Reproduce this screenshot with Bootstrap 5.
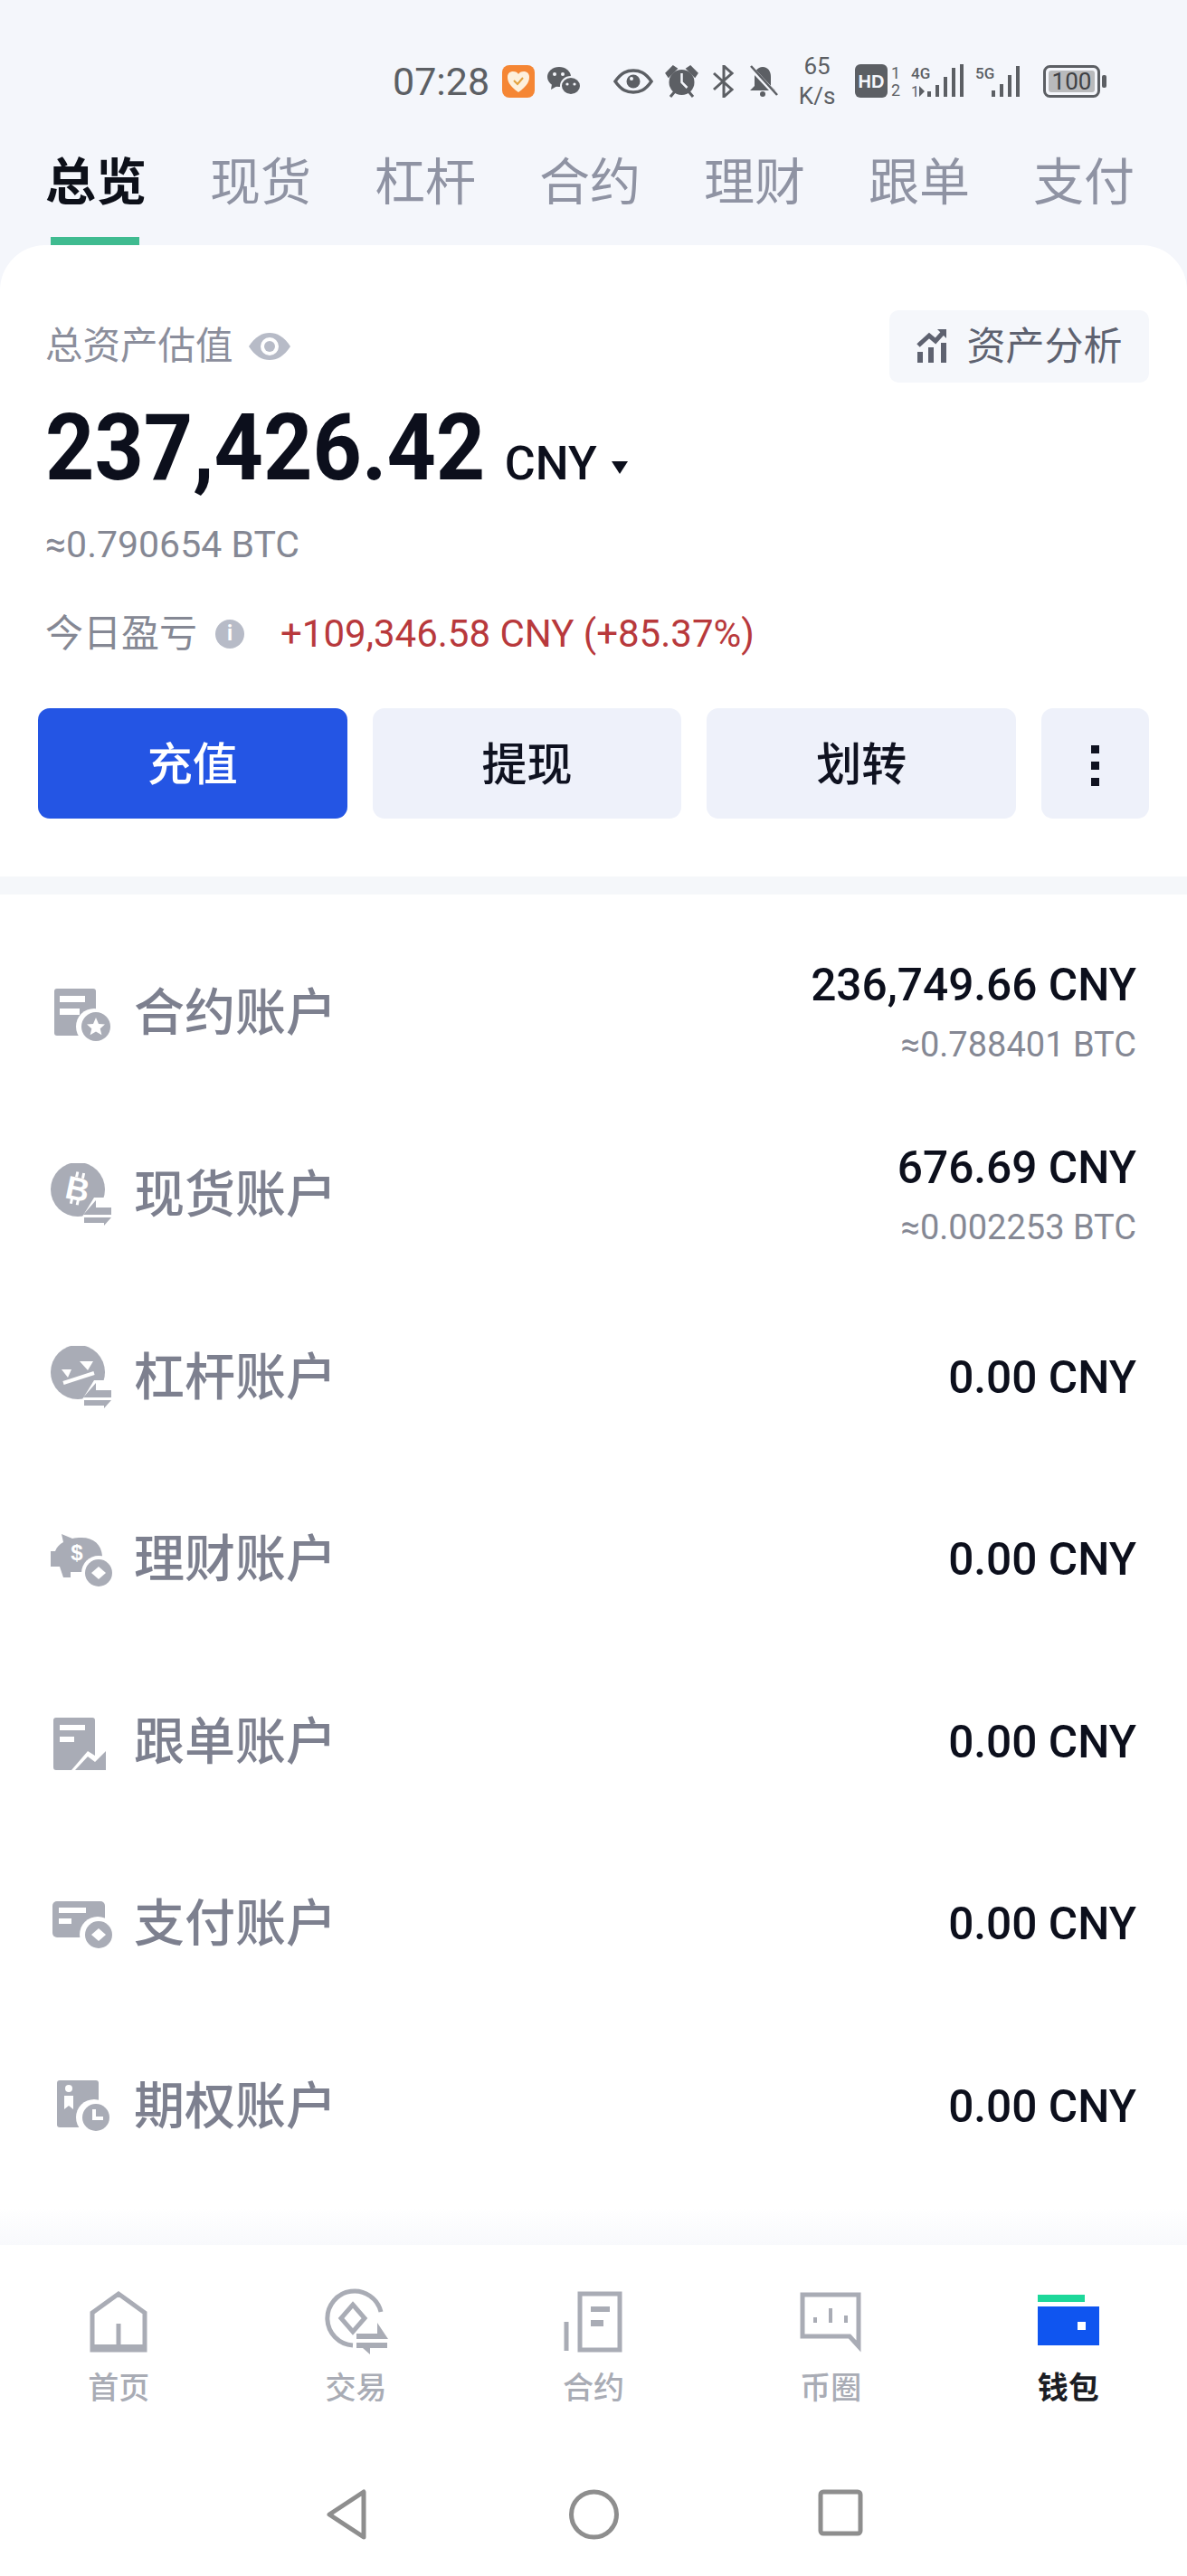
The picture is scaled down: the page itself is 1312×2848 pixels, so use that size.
<!DOCTYPE html>
<html lang="zh">
<head>
  <meta charset="UTF-8">
  <title>钱包</title>
  <link href="https://cdn.jsdelivr.net/npm/bootstrap@5.3.0/dist/css/bootstrap.min.css" rel="stylesheet">
  <style>
    body {
      background-color: #f4f6fb;
      font-family: Roboto, "Noto Sans CJK SC", sans-serif;
      width: 1312px;
      height: 2848px;
      overflow: hidden;
    }
    /* barra de estado */
    .estado {
      height: 140px;
      padding: 39px 0 0 434px;
      color: #5c5f64;
    }
    .estado svg { display: block; flex: none; }
    .hora { font-size: 43px; line-height: 52px; margin-right: 14px; white-space: nowrap; flex: none; }
    .velocidad { font-size: 26px; line-height: 33px; width: 44px; text-align: center; margin: 0 20px 0 21px; flex: none; }
    .gap-wechat { margin-left: 13px; }
    .gap-ojo { margin-left: 36px; }
    .gap-icono { margin-left: 13px; }
    .gap-bateria { margin-left: 16px; }
    /* pestañas */
    .pestanas { height: 131px; padding-left: 50px; gap: 70px; }
    .pestana { width: 112px; font-size: 56px; line-height: 60px; padding-top: 32px; color: #8f93a3; white-space: nowrap; }
    .pestana-activa { color: #0d1019; font-weight: 700; }
    .subrayado { display: block; width: 98px; height: 9px; margin: 30px auto 0 6px; background: #3fbb90; }
    /* tarjeta principal */
    .tarjeta-total {
      height: 698px;
      background: #fff;
      border-radius: 50px 50px 0 0;
      padding: 72px 42px 0 50px;
    }
    .total-label { font-size: 41.500px; line-height: 80px; color: #8b8e9c; }
    .total-ojo { margin-left: 16px; }
    .btn-analisis {
      width: 287px; height: 80px; background: #f5f7fb; border-radius: 10px;
      font-size: 43px; color: #5e6270; border: 0; padding: 0;
    }
    .analisis-icono { margin-right: 22px; }
    .monto { color: #0c0f1c; margin-top: 17px; height: 110px; }
    .monto-num {
      font-size: 102px; font-weight: 700; line-height: 110px;
      display: inline-block; transform: scaleX(.93); transform-origin: left; margin-right: -36px;
    }
    .monto-cny { font-size: 52px; font-weight: 500; margin-left: 21px; }
    .monto-flecha { width: 0; height: 0; border-left: 9px solid transparent; border-right: 9px solid transparent; border-top: 14px solid #0c0f1c; margin: 0 0 26px 16px; align-self: flex-end; }
    .btc-total { font-size: 41px; line-height: 50px; color: #858894; margin-top: 27px; }
    .hoy { font-size: 42px; line-height: 50px; color: #858894; margin-top: 49px; }
    .hoy-valor { color: #b8393c; margin-left: 40px; }
    .info-redonda {
      width: 32px; height: 32px; border-radius: 50%; background: #b7bbc7; color: #fff;
      font-size: 23px; font-weight: 700; line-height: 32px; text-align: center; margin-left: 20px;
    }
    .acciones { margin: 57px 0 0 -8px; gap: 28px; }
    .btn-accion {
      width: 342px; height: 122px; border: 0; border-radius: 13px; padding: 4px 0 0;
      font-size: 50px; font-weight: 500; background: #eef1fa; color: #0f1220;
    }
    .btn-azul { background: #2455e4; color: #fff; }
    .btn-azul:hover { background: #2455e4; color: #fff; }
    .btn-mas { width: 119px; }
    .puntos i { display: block; width: 9px; height: 9px; background: #0f1220; margin: 9px 0; }
    .separador { height: 20px; background: #f5f7fa; }
    /* cuentas */
    .cuentas { padding: 30px 0 0; height: 1493px; background: #fff; }
    .cuenta { height: 201.500px; padding: 0 56px 0 54px; }
    .cuenta-icono { width: 74px; height: 70px; margin-right: 20px; flex: none; }
    .cuenta-nombre { font-size: 56px; font-weight: 500; color: #7d808f; }
    .cuenta-valor { font-size: 49.600px; line-height: 60px; font-weight: 500; color: #0c0f1c; text-align: right; }
    .cuenta-btc { font-size: 38px; line-height: 50px; color: #858894; text-align: right; margin-top: 11px; }
    .sombra-nav { height: 40px; margin-top: -40px; background: linear-gradient(#fff, #f8f9fc); position: relative; }
    /* navegación inferior */
    .nav-inferior { height: 366px; background: #fff; }
    .nav-item-inf { width: 262.400px; height: 186px; padding-top: 51px; text-align: center; font-size: 34px; font-weight: 500; color: #a9acb5; line-height: 40px; }
    .nav-item-inf svg { display: block; margin: 0 auto 19px; overflow: visible; }
    .nav-item-activo { color: #1b1d24; font-weight: 700; }
    .sistema { height: 180px; padding: 84px 0 0 360px; }
    .sistema svg { display: block; flex: none; }
    .sis-circulo { margin-left: 223px; }
    .sis-cuadro { margin-left: 220px; }
  </style>
</head>
<body>

  <!-- barra de estado -->
  <div class="estado d-flex align-items-center">
    <div class="hora">07:28</div>
    <svg width="36" height="36" viewBox="0 0 36 36"><rect width="36" height="36" rx="8" fill="#f58634"/><path d="M18 30C8 23 6 18 6 13c0-4 3-6 6-6 3 0 5 1 6 3 1-2 3-3 6-3 3 0 6 2 6 6 0 5-2 10-12 17z" fill="#fdf0dc"/><path d="M13 17l4 4 6-7" fill="none" stroke="#e2a13c" stroke-width="2"/></svg>
    <svg class="gap-wechat" width="38" height="34" viewBox="0 0 38 34"><ellipse cx="14" cy="12" rx="13" ry="11" fill="#5c5f64"/><path d="M6 20l-1 6 7-4z" fill="#5c5f64"/><ellipse cx="27" cy="22" rx="11" ry="10" fill="#5c5f64" stroke="#f4f6fb" stroke-width="2"/><circle cx="9" cy="9" r="2" fill="#f4f6fb"/><circle cx="18" cy="9" r="2" fill="#f4f6fb"/><circle cx="23" cy="20" r="1.600" fill="#f4f6fb"/><circle cx="31" cy="20" r="1.600" fill="#f4f6fb"/></svg>
    <svg class="gap-ojo" width="44" height="28" viewBox="0 0 44 28"><path d="M2 14C9 4 15 2 22 2s13 2 20 12c-7 10-13 12-20 12S9 24 2 14z" fill="none" stroke="#5c5f64" stroke-width="3.500"/><circle cx="22" cy="14" r="7.500" fill="#5c5f64"/><circle cx="20" cy="11" r="2" fill="#f4f6fb"/></svg>
    <svg class="gap-icono" width="37" height="36" viewBox="0 0 37 36"><circle cx="18.500" cy="19" r="14" fill="#5c5f64"/><path d="M2 9l7-7 3 2-8 8zM35 9l-7-7-3 2 8 8zM6 35l5-6M31 35l-5-6" stroke="#5c5f64" stroke-width="3" fill="#5c5f64"/><path d="M18.500 9v10l6 6" stroke="#f4f6fb" stroke-width="2.500" fill="none"/></svg>
    <svg class="gap-icono" width="29" height="36" viewBox="0 0 29 36"><path d="M4 9l20 18-9 8V1l9 8L4 27" fill="none" stroke="#5c5f64" stroke-width="3"/></svg>
    <svg class="gap-icono" width="33" height="36" viewBox="0 0 33 36"><path d="M16 2c-6 0-9 5-9 11v10l-5 5h28l-5-5V13c0-6-3-11-9-11z" fill="#5c5f64"/><circle cx="16" cy="32" r="3" fill="#5c5f64"/><path d="M2 2l30 32" stroke="#f4f6fb" stroke-width="5"/><path d="M3 1l29 32" stroke="#5c5f64" stroke-width="2.500"/></svg>
    <div class="velocidad">65<br>K/s</div>
    <svg width="192" height="44" viewBox="0 -3 192 44">
      <rect width="36" height="37" rx="6" fill="#5c5f64"/>
      <text x="18" y="26" text-anchor="middle" font-family="Liberation Sans" font-weight="700" font-size="20" fill="#f4f6fb">HD</text>
      <text x="45" y="16" text-anchor="middle" font-family="Roboto" font-size="18" fill="#5c5f64">1</text>
      <text x="45" y="35" text-anchor="middle" font-family="Roboto" font-size="18" fill="#5c5f64">2</text>
      <text x="62" y="16" font-family="Roboto" font-weight="500" font-size="17" fill="#5c5f64">4G</text>
      <text x="62" y="36" font-family="Roboto" font-size="16" fill="#5c5f64">1</text>
      <path d="M71 24l6 6-6 6z" fill="#5c5f64"/>
      <path d="M80 30h4v6h-4zM89 23h4v13h-4zM98 14h4v22h-4zM107 4h4v32h-4zM116 0h4v36h-4z" fill="#5c5f64"/>
      <text x="133" y="16" font-family="Roboto" font-weight="500" font-size="17" fill="#5c5f64">5G</text>
      <path d="M151 29h4v7h-4zM160 22h4v14h-4zM169 12h4v24h-4zM178 2h4v34h-4z" fill="#5c5f64"/>
    </svg>
    <svg class="gap-bateria" width="70" height="36" viewBox="0 0 70 36"><rect x="1.500" y="1.500" width="60" height="33" rx="6" fill="none" stroke="#5c5f64" stroke-width="3"/><rect x="6" y="6" width="51" height="24" rx="3" fill="#b9babc"/><text x="31.500" y="27" text-anchor="middle" font-family="Roboto" font-size="26" fill="#3f4145">100</text><rect x="65" y="11" width="5" height="14" rx="2" fill="#5c5f64"/></svg>
  </div>

  <!-- pestañas -->
  <div class="pestanas d-flex">
    <div class="pestana pestana-activa">总览<span class="subrayado"></span></div>
    <div class="pestana">现货</div>
    <div class="pestana">杠杆</div>
    <div class="pestana">合约</div>
    <div class="pestana">理财</div>
    <div class="pestana">跟单</div>
    <div class="pestana">支付</div>
  </div>

  <!-- resumen -->
  <div class="tarjeta-total">
    <div class="d-flex justify-content-between align-items-center">
      <div class="total-label d-flex align-items-center">
        总资产估值
        <svg class="total-ojo" width="48" height="32" viewBox="0 0 48 32"><path d="M1 16C8 5 16 1 24 1s16 4 23 15c-7 11-15 15-23 15S8 27 1 16z" fill="#b7bbc7"/><circle cx="24" cy="16" r="10" fill="#fff"/><circle cx="24" cy="16" r="6" fill="#b7bbc7"/></svg>
      </div>
      <button class="btn-analisis d-flex align-items-center justify-content-center" type="button">
        <svg class="analisis-icono" width="34" height="38" viewBox="0 0 34 38"><path d="M1 25h6v12H1zM13 20h6v17h-6zM27 15h6v22h-6z" fill="#5e6270"/><path d="M2 18L14 7l7 6L30 3" fill="none" stroke="#5e6270" stroke-width="5"/><path d="M23 0h10v10z" fill="#5e6270"/></svg>
        资产分析
      </button>
    </div>
    <div class="monto d-flex align-items-baseline"><span class="monto-num">237,426.42</span><span class="monto-cny">CNY</span><span class="monto-flecha"></span></div>
    <div class="btc-total">≈0.790654 BTC</div>
    <div class="hoy d-flex align-items-center">今日盈亏<span class="info-redonda">i</span><span class="hoy-valor">+109,346.58 CNY (+85.37%)</span></div>
    <div class="acciones d-flex">
      <button class="btn btn-accion btn-azul" type="button">充值</button>
      <button class="btn btn-accion" type="button">提现</button>
      <button class="btn btn-accion" type="button">划转</button>
      <button class="btn btn-accion btn-mas d-flex align-items-center justify-content-center" type="button"><span class="puntos"><i></i><i></i><i></i></span></button>
    </div>
  </div>
  <div class="separador"></div>

  <!-- cuentas -->
  <div class="cuentas">
    <div class="cuenta d-flex align-items-center justify-content-between">
      <div class="d-flex align-items-center">
        <svg class="cuenta-icono" viewBox="0 0 74 70"><rect x="6" y="8" width="46" height="52" rx="3" fill="#a9acb6"/><path d="M12 16h28v7H12zM12 30h22v7H12z" fill="#fff"/><circle cx="50" cy="50" r="20" fill="#fff"/><circle cx="52" cy="50" r="16" fill="#a9acb6"/><path d="M52 40l3 7 7 .6-5.300 4.600 1.700 7-6.400-3.800-6.400 3.800 1.700-7L42 47.600l7-.6z" fill="#fff"/></svg>
        <span class="cuenta-nombre">合约账户</span>
      </div>
      <div><div class="cuenta-valor">236,749.66 CNY</div><div class="cuenta-btc">≈0.788401 BTC</div></div>
    </div>
    <div class="cuenta d-flex align-items-center justify-content-between">
      <div class="d-flex align-items-center">
        <svg class="cuenta-icono" viewBox="0 0 74 70"><circle cx="32" cy="29" r="30" fill="#a9acb6"/><g transform="rotate(12 32 28)"><text x="32" y="41" text-anchor="middle" font-family="Liberation Sans" font-weight="700" font-size="36" fill="#fff">B</text><path d="M28 10v6M35 10v6M28 40v6M35 40v6" stroke="#fff" stroke-width="3"/></g><path d="M34 64L50 38h24v34H34z" fill="#fff"/><path d="M52 41L38 57h31v-8H52zM39 60h30l-8 9v-3H39z" fill="#a9acb6"/></svg>
        <span class="cuenta-nombre">现货账户</span>
      </div>
      <div><div class="cuenta-valor">676.69 CNY</div><div class="cuenta-btc">≈0.002253 BTC</div></div>
    </div>
    <div class="cuenta d-flex align-items-center justify-content-between">
      <div class="d-flex align-items-center">
        <svg class="cuenta-icono" viewBox="0 0 74 70"><circle cx="32" cy="29" r="30" fill="#a9acb6"/><path d="M16 41l34-11" stroke="#fff" stroke-width="4" fill="none"/><path d="M14 26h11l-4 9zM34 17h15l-6 10z" fill="#fff"/><path d="M34 64L50 38h24v34H34z" fill="#fff"/><path d="M52 41L38 57h31v-8H52zM39 60h30l-8 9v-3H39z" fill="#a9acb6"/></svg>
        <span class="cuenta-nombre">杠杆账户</span>
      </div>
      <div class="cuenta-valor">0.00 CNY</div>
    </div>
    <div class="cuenta d-flex align-items-center justify-content-between">
      <div class="d-flex align-items-center">
        <svg class="cuenta-icono" viewBox="0 0 74 70"><path d="M2 26h5c2-5 5-8 9-10l-2-9 12 5c3-1 6-1 10-1 14 0 22 8 23 20v16H50l-3 8h-8v-6H24v6h-8l-4-12H2z" fill="#a9acb6"/><text x="31" y="36" text-anchor="middle" font-family="Liberation Sans" font-weight="700" font-size="24" fill="#fff">$</text><circle cx="55" cy="50" r="19" fill="#fff"/><circle cx="55" cy="50" r="15" fill="#a9acb6"/><path d="M55 43l8 7-8 7-8-7z" fill="#fff"/></svg>
        <span class="cuenta-nombre">理财账户</span>
      </div>
      <div class="cuenta-valor">0.00 CNY</div>
    </div>
    <div class="cuenta d-flex align-items-center justify-content-between">
      <div class="d-flex align-items-center">
        <svg class="cuenta-icono" viewBox="0 0 74 70"><path d="M8 8H48q3 0 3 3V50l-8-5-18 21H8q-3 0-3-3V11q0-3 3-3z" fill="#a9acb6"/><path d="M12 16h28v6H12zM12 29h16v6H12z" fill="#fff"/><path d="M29 66L43 51l8 6 12-12V66z" fill="#a9acb6"/></svg>
        <span class="cuenta-nombre">跟单账户</span>
      </div>
      <div class="cuenta-valor">0.00 CNY</div>
    </div>
    <div class="cuenta d-flex align-items-center justify-content-between">
      <div class="d-flex align-items-center">
        <svg class="cuenta-icono" viewBox="0 0 74 70"><rect x="4" y="10" width="58" height="40" rx="5" fill="#a9acb6"/><path d="M11 17h30v6H11zM11 29h14v6H11z" fill="#fff"/><circle cx="54" cy="47" r="20" fill="#fff"/><circle cx="55" cy="47" r="15" fill="#a9acb6"/><path d="M55 40l8 7-8 7-8-7z" fill="#fff"/></svg>
        <span class="cuenta-nombre">支付账户</span>
      </div>
      <div class="cuenta-valor">0.00 CNY</div>
    </div>
    <div class="cuenta d-flex align-items-center justify-content-between">
      <div class="d-flex align-items-center">
        <svg class="cuenta-icono" viewBox="0 0 74 70"><rect x="9" y="6" width="46" height="52" rx="3" fill="#a9acb6"/><circle cx="22" cy="15" r="4" fill="#fff"/><path d="M17 23h10v15l-5-4-5 4z" fill="#fff"/><circle cx="50" cy="47" r="20" fill="#fff"/><circle cx="52" cy="47" r="15" fill="#a9acb6"/><path d="M50 38v10h10" fill="none" stroke="#fff" stroke-width="4"/></svg>
        <span class="cuenta-nombre">期权账户</span>
      </div>
      <div class="cuenta-valor">0.00 CNY</div>
    </div>
  </div>
  <div class="sombra-nav"></div>

  <!-- navegación inferior -->
  <div class="nav-inferior">
    <div class="d-flex">
      <div class="nav-item-inf">
        <svg width="64" height="68" viewBox="0 0 64 68"><path d="M3 65V24L32 3l29 21v41zM32 65V36" fill="none" stroke="#a9acb5" stroke-width="5"/><path d="M3 59h58v7H3z" fill="#a9acb5"/></svg>
        首页
      </div>
      <div class="nav-item-inf">
        <svg width="74" height="68" viewBox="0 3 74 68"><path d="M64 26A30 30 0 1 0 33 63" fill="none" stroke="#a9acb5" stroke-width="5"/><path d="M33 18l13 15-13 15-13-15z" fill="none" stroke="#a9acb5" stroke-width="5"/><path d="M60 38l12 18H37v-6h23zM37 60h34v6H52v7l-8-7h-7z" fill="#a9acb5"/></svg>
        交易
      </div>
      <div class="nav-item-inf">
        <svg width="66" height="68" viewBox="0 0 66 68"><path d="M18 3h44v62H18zM3 34v32" fill="none" stroke="#a9acb5" stroke-width="5"/><path d="M30 17h21v6H30zM30 32h14v7H30z" fill="#a9acb5"/></svg>
        合约
      </div>
      <div class="nav-item-inf">
        <svg width="68" height="68" viewBox="0 0 68 68"><path d="M3 4h62v57L55 50H3z" fill="none" stroke="#a9acb5" stroke-width="5"/><path d="M17 29v6M34 19v16M51 27v8" stroke="#a9acb5" stroke-width="4"/></svg>
        币圈
      </div>
      <div class="nav-item-inf nav-item-activo">
        <svg width="68" height="68" viewBox="0 0 68 68"><rect y="4" width="52" height="8" fill="#1dd89a"/><rect y="17" width="68" height="43" fill="#0f55f0"/><rect x="44" y="34" width="9" height="9" fill="#fff"/></svg>
        钱包
      </div>
    </div>
    <div class="sistema d-flex align-items-start">
      <svg width="46" height="56" viewBox="0 0 46 56"><path d="M42 3v50L4 28z" fill="none" stroke="#8e8e8e" stroke-width="5" stroke-linejoin="round"/></svg>
      <svg class="sis-circulo" width="55" height="56" viewBox="0 0 55 56"><circle cx="27.500" cy="28" r="25" fill="none" stroke="#8e8e8e" stroke-width="5"/></svg>
      <svg class="sis-cuadro" width="50" height="52" viewBox="0 0 50 52"><rect x="3" y="3" width="44" height="46" rx="3" fill="none" stroke="#8e8e8e" stroke-width="5"/></svg>
    </div>
  </div>

</body>
</html>
